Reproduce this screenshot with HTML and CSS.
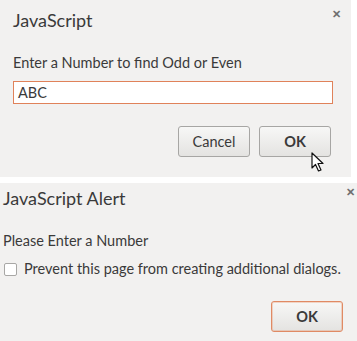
FILE: index.html
```html
<!DOCTYPE html>
<html>
<head>
<meta charset="utf-8">
<link rel="stylesheet" href="styles.css">
</head>
<body>
<div class="dialog prompt">
  <div class="titlebar">
    <span class="title">JavaScript</span>
    <span class="close">&#x2715;</span>
  </div>
  <div class="message">Enter a Number to find Odd or Even</div>
  <div class="input">ABC</div>
  <div class="buttons">
    <div class="btn">Cancel</div>
    <div class="btn ok">OK</div>
  </div>
  <svg class="cursor" width="15" height="21" viewBox="0 0 15 21">
    <path d="M1 1 L1 16 L4.5 12.5 L7.5 19 L10 18 L7 11.5 L12 11.5 Z" fill="#fff" stroke="#111" stroke-width="1.2" stroke-linejoin="round"/>
  </svg>
</div>
<div class="dialog alert">
  <div class="titlebar">
    <span class="title">JavaScript Alert</span>
    <span class="close">&#x2715;</span>
  </div>
  <div class="message">Please Enter a Number</div>
  <label class="check"><span class="box"></span>Prevent this page from creating additional dialogs.</label>
  <div class="buttons">
    <div class="btn ok focus">OK</div>
  </div>
</div>
</body>
</html>
```
FILE: styles.css
```css
html, body { margin: 0; padding: 0; background: #fff; }
body {
  width: 357px; height: 341px; overflow: hidden;
  font-family: Lato, "Open Sans", sans-serif;
  color: #3a3a3a;
  white-space: nowrap;
}
.dialog { background: #f2f1f0; position: relative; box-sizing: border-box; }
.prompt { width: 351px; height: 177px; padding: 0 20px 0 13px; }
.alert { width: 357px; height: 158px; margin-top: 6px; padding: 0 14px 0 3px; }
.titlebar { display: flex; justify-content: space-between; align-items: flex-start; }
.prompt .titlebar { height: 54px; padding-top: 9px; box-sizing: border-box; }
.alert .titlebar { height: 49px; padding-top: 4px; box-sizing: border-box; }
.title { font-size: 18px; line-height: 22px; }
.close { font-size: 11px; color: #6f6f6f; line-height: 12px; font-weight: bold; }
.prompt .close { margin-right: -10px; margin-top: -1px; }
.alert .close { margin-right: -12px; margin-top: -1px; }
.message { font-size: 14.5px; line-height: 18px; }
.prompt .message { margin-bottom: 9px; }
.input {
  height: 23px; box-sizing: border-box; border: 1px solid #e0825a; background: #fff;
  font-size: 14.5px; line-height: 21px; padding-left: 4px; width: 320px;
}
.buttons { display: flex; justify-content: flex-end; gap: 9px; }
.prompt .buttons { margin-top: 22px; }
.btn {
  width: 72px; height: 31px; box-sizing: border-box; border: 1px solid #a7a6a4; border-radius: 3px;
  background: linear-gradient(#f7f7f6, #e4e3e1);
  display: flex; align-items: center; justify-content: center; font-size: 14.5px; color: #3a3a3a;
}
.ok { font-weight: bold; }
.focus { border-color: #e08a64; box-shadow: 0 0 0 1px rgba(233,150,110,0.35) inset; }
.check { display: flex; align-items: center; font-size: 14.5px; line-height: 18px; margin-top: 10px; }
.box {
  width: 13px; height: 13px; box-sizing: border-box; border: 1px solid #a8a7a5; border-radius: 2px;
  background: #fff; margin: 0 7px 0 1px;
}
.alert .buttons { margin-top: 23px; }
.cursor { position: absolute; left: 311px; top: 152px; }
```
